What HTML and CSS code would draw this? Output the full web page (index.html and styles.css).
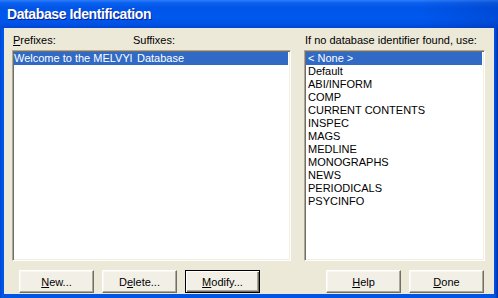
FILE: index.html
```html
<!DOCTYPE html>
<html lang="en">
<head>
    <meta charset="UTF-8">
    <title>Database Identification</title>
    <link rel="stylesheet" href="styles.css">
</head>
<body>
    <div class="window">
        <div class="titlebar">
            <span class="title">Database Identification</span>
        </div>
        <div class="client">
            <div class="panes">
                <div class="pane pane-left">
                    <div class="labels labels-left">
                        <span><u>P</u>refixes:</span>
                        <span>Suffixes:</span>
                    </div>
                    <div class="listbox">
                        <div class="row row-split selected">
                            <span>Welcome to the MELVYl</span>
                            <span>Database</span>
                        </div>
                    </div>
                </div>
                <div class="pane pane-right">
                    <div class="labels">
                        <span>If no database identifier found, use:</span>
                    </div>
                    <div class="listbox listbox-right">
                        <div class="row selected">&lt; None &gt;</div>
                        <div class="row">Default</div>
                        <div class="row">ABI/INFORM</div>
                        <div class="row">COMP</div>
                        <div class="row">CURRENT CONTENTS</div>
                        <div class="row">INSPEC</div>
                        <div class="row">MAGS</div>
                        <div class="row">MEDLINE</div>
                        <div class="row">MONOGRAPHS</div>
                        <div class="row">NEWS</div>
                        <div class="row">PERIODICALS</div>
                        <div class="row">PSYCINFO</div>
                    </div>
                </div>
            </div>
            <div class="buttons">
                <div class="btn-group btn-group-left">
                    <button class="btn" type="button"><u>N</u>ew...</button>
                    <button class="btn" type="button">D<u>e</u>lete...</button>
                    <button class="btn btn-default" type="button"><u>M</u>odify...</button>
                </div>
                <div class="btn-group btn-group-right">
                    <button class="btn" type="button"><u>H</u>elp</button>
                    <button class="btn" type="button"><u>D</u>one</button>
                </div>
            </div>
        </div>
    </div>
</body>
</html>
```

FILE: styles.css
```css
body {
    margin: 0;
    width: 498px;
    height: 298px;
    overflow: hidden;
    font-family: 'Liberation Sans', Arial, sans-serif;
    font-size: 11px;
    color: #000;
}

.window {
    width: 498px;
    height: 298px;
    display: flex;
    flex-direction: column;
    background: linear-gradient(to right, #0047d8 0, #0055e5 2px, #0055e5 494px, #0046d6 496px, #00309c 498px);
}

.titlebar {
    height: 28px;
    flex: none;
    display: flex;
    align-items: center;
    padding-left: 7px;
    padding-top: 0;
    box-sizing: border-box;
    background:
        linear-gradient(to right, rgba(0, 0, 0, 0) 0, rgba(0, 0, 0, 0) 420px, rgba(0, 20, 120, 0.18) 498px),
        linear-gradient(to bottom, #2d7cf9 0, #0a60ee 3px, #0055e8 8px, #0058ee 18px, #0052e4 24px, #0046d2 28px);
}

.title {
    color: #fff;
    font-weight: bold;
    font-size: 14px;
    letter-spacing: -0.4px;
    text-shadow: 1px 1px 0 #0a1e8c;
}

.client {
    flex: 1;
    margin: 0 4px 4px 4px;
    background-color: #ece9d8;
    padding: 6px 9px 0 8px;
    display: flex;
    flex-direction: column;
}

.panes {
    display: flex;
    gap: 13px;
}

.pane {
    display: flex;
    flex-direction: column;
}

.pane-left {
    width: 279px;
}

.pane-right {
    flex: 1;
}

.labels {
    height: 13px;
    line-height: 13px;
    margin-bottom: 3px;
    padding-left: 1px;
    white-space: nowrap;
}

.labels-left {
    display: grid;
    grid-template-columns: 120px 1fr;
}

.listbox {
    height: 211px;
    box-sizing: border-box;
    background-color: #fff;
    border-top: 1px solid #aca899;
    border-left: 1px solid #aca899;
    border-right: 1px solid #fff;
    border-bottom: 1px solid #fff;
    box-shadow: inset 1px 1px 0 #716f64, inset -1px -1px 0 #f1efe2;
    padding: 1px 2px 1px 1px;
}

.row {
    height: 13px;
    line-height: 13px;
    padding-left: 2px;
    white-space: nowrap;
}

.row-split {
    display: grid;
    grid-template-columns: 123px 1fr;
    padding-left: 0;
}

.selected {
    background-color: #316ac5;
    color: #fff;
}

.buttons {
    display: flex;
    justify-content: space-between;
    margin-top: 9px;
}

.btn-group {
    display: flex;
    gap: 8px;
}

.btn-group-left {
    padding-left: 7px;
}

.btn-group-right {
    margin-right: 1px;
}

.btn {
    width: 75px;
    height: 23px;
    box-sizing: border-box;
    padding: 0;
    font-family: 'Liberation Sans', Arial, sans-serif;
    font-size: 11px;
    color: #000;
    background-color: #f2f0e6;
    border-top: 1px solid #fff;
    border-left: 1px solid #fff;
    border-right: 1px solid #716f64;
    border-bottom: 1px solid #716f64;
    box-shadow: inset -1px -1px 0 #aca899, inset 1px 1px 0 #f8f7f2;
}

.btn-default {
    border: 1px solid #000;
    box-shadow: inset 1px 1px 0 #fff, inset -1px -1px 0 #716f64, inset -2px -2px 0 #aca899;
}
```
